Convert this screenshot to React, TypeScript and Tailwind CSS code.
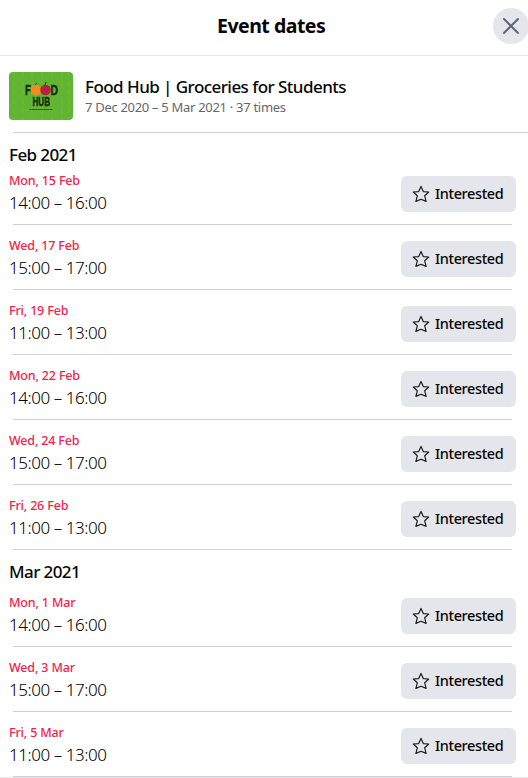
import React from "react";

type Slot = { date: string; time: string };

const february: Slot[] = [
  { date: "Mon, 15 Feb", time: "14:00 – 16:00" },
  { date: "Wed, 17 Feb", time: "15:00 – 17:00" },
  { date: "Fri, 19 Feb", time: "11:00 – 13:00" },
  { date: "Mon, 22 Feb", time: "14:00 – 16:00" },
  { date: "Wed, 24 Feb", time: "15:00 – 17:00" },
  { date: "Fri, 26 Feb", time: "11:00 – 13:00" },
];

const march: Slot[] = [
  { date: "Mon, 1 Mar", time: "14:00 – 16:00" },
  { date: "Wed, 3 Mar", time: "15:00 – 17:00" },
  { date: "Fri, 5 Mar", time: "11:00 – 13:00" },
];

function StarIcon() {
  return (
    <svg width="18" height="18" viewBox="0 0 18 18" fill="none" stroke="#1c1e21" strokeWidth="1.2" strokeLinejoin="round">
      <path d="M9 1.4 L11.3 6.6 L16.7 7 L12.7 10.8 L14.1 16.4 L9 14.2 L3.9 16.4 L5.3 10.8 L1.3 7 L6.7 6.6 Z" />
    </svg>
  );
}

function SlotRow({ date, time }: Slot) {
  return (
    <li className="flex h-[65px] flex-col">
      <div className="flex h-16 justify-between pl-[9px] pr-3">
        <div className="pt-3">
          <div className="text-[12.5px] leading-[18px] font-medium tracking-[-0.16px] text-[#f3244c]">{date}</div>
          <div className="pt-[2px] text-[17px] leading-[22px] font-[350] tracking-[-0.45px] text-black">{time}</div>
        </div>
        <button className="mt-4 flex h-9 w-[115px] items-center gap-1 rounded-md bg-[#e4e6eb] pl-[11px] text-[14.5px] font-medium tracking-[-0.38px] text-[#050505]">
          <StarIcon />
          <span className="ml-[1px]">Interested</span>
        </button>
      </div>
      <div className="ml-[13px] mr-4 h-px bg-[#ced0d4]" />
    </li>
  );
}

function Thumbnail() {
  return (
    <svg className="h-12 w-16 rounded" viewBox="0 0 64 48">
      <rect width="64" height="48" fill="#62b532" />
      <path d="M5 0v48M14 0v48M23 0v48M33 0v48M43 0v48M53 0v48M60 0v48" stroke="#75c33b" strokeWidth="2" strokeDasharray="5 4" opacity=".3" />
      <g fill="#162f18" stroke="#162f18" strokeWidth=".5" fontFamily="Liberation Sans, sans-serif" fontWeight="700">
        <text x="16" y="23" fontSize="14.500" textLength="6" lengthAdjust="spacingAndGlyphs">F</text>
        <text x="41.500" y="22.500" fontSize="14.500" textLength="7.500" lengthAdjust="spacingAndGlyphs">D</text>
        <text x="23.500" y="33.800" fontSize="12" textLength="17.500" lengthAdjust="spacingAndGlyphs">HUB</text>
      </g>
      <path d="M20.500 37.500h23" stroke="#245822" strokeWidth="1.100" strokeDasharray="2 .5 3 .4" />
      <circle cx="27" cy="18" r="5.400" fill="#f58a20" />
      <circle cx="36.500" cy="18" r="5.300" fill="#b71f43" />
      <path d="M26 13l2-2M36 13l1-3" stroke="#162f18" />
    </svg>
  );
}

export default function App() {
  return (
    <main className="h-[778px] w-[528px] overflow-hidden bg-white font-['Noto_Sans','Open_Sans',sans-serif]">
      <header className="flex h-14 items-start border-b border-[#e4e6eb]">
        <h1 className="ml-[217px] mt-3 w-[276px] shrink-0 text-[19.5px] leading-7 font-bold tracking-[-0.5px] whitespace-nowrap text-[#050505]">Event dates</h1>
        <button aria-label="Close" className="mt-2 flex size-9 shrink-0 items-center justify-center rounded-full bg-[#e4e6eb]">
          <svg width="18" height="18" viewBox="0 0 18 18" fill="none" stroke="#606770" strokeWidth="2" strokeLinecap="round">
            <path d="M2 2l14 14M16 2L2 16" />
          </svg>
        </button>
      </header>
      <section className="flex h-[76px] items-start gap-3 pl-[9px] pt-4">
        <Thumbnail />
        <div className="pt-1">
          <h2 className="text-[17px] leading-[22px] font-medium tracking-[-0.55px] whitespace-nowrap text-[#050505]">Food Hub | Groceries for Students</h2>
          <p className="text-[13px] leading-[18px] tracking-[-0.3px] whitespace-nowrap text-[#65676b]">7 Dec 2020 – 5 Mar 2021 · 37 times</p>
        </div>
      </section>
      <div className="ml-[13px] h-px bg-[#ced0d4]" />
      <h3 className="h-[27px] pl-[9px] pt-[11px] text-[17px] leading-[22px] font-medium tracking-[-0.6px] text-[#050505]">Feb 2021</h3>
      <ul>{february.map((s) => <SlotRow key={s.date} {...s} />)}</ul>
      <h3 className="h-8 pl-[9px] pt-[11px] text-[17px] leading-[22px] font-medium tracking-[-0.6px] text-[#050505]">Mar 2021</h3>
      <ul>{march.map((s) => <SlotRow key={s.date} {...s} />)}</ul>
      <div className="h-px bg-[#e4e6eb]" />
    </main>
  );
}
